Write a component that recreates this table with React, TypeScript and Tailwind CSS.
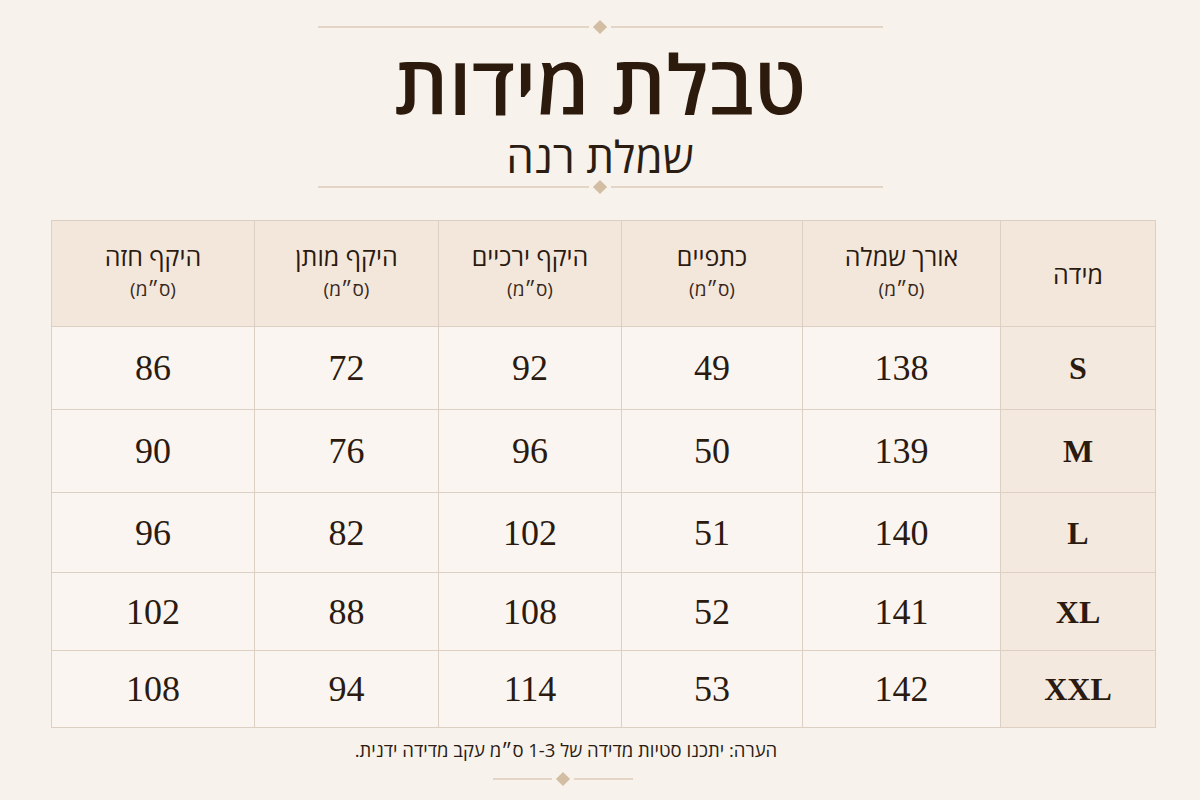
import React from "react";

const cols = [
  { w: "w-[155px]", t: "מידה", unit: false },
  { w: "w-[198px]", t: "אורך שמלה", unit: true },
  { w: "w-[181px]", t: "כתפיים", unit: true },
  { w: "w-[183px]", t: "היקף ירכיים", unit: true },
  { w: "w-[184px]", t: "היקף מותן", unit: true },
  { w: "w-[203px]", t: "היקף חזה", unit: true },
];

const rows = [
  ["S", "138", "49", "92", "72", "86"],
  ["M", "139", "50", "96", "76", "90"],
  ["L", "140", "51", "102", "82", "96"],
  ["XL", "141", "52", "108", "88", "102"],
  ["XXL", "142", "53", "114", "94", "108"],
];
const rowH = ["h-[83px]", "h-[83px]", "h-[80px]", "h-[78px]", "h-[77px]"];

const sans = '"Open Sans", "Liberation Sans", "DejaVu Sans", sans-serif';
const serif = '"Liberation Serif", "DejaVu Serif", serif';

function Ornament({ w }: { w: string }) {
  return (
    <div className={`flex items-center justify-center ${w}`}>
      <div className="h-[2px] flex-1 bg-[#e4d6c6]" />
      <div className="mx-[6px] h-[10px] w-[10px] rotate-45 bg-[#d3bda3]" />
      <div className="h-[2px] flex-1 bg-[#e4d6c6]" />
    </div>
  );
}

export default function App() {
  return (
    <div
      dir="rtl"
      className="flex h-[800px] w-[1200px] flex-col items-center bg-[#f8f2ec] text-[#2a1a0f]"
      style={{ fontFamily: sans }}
    >
      <div className="mt-[22px]">
        <Ornament w="w-[565px]" />
      </div>
      <div className="mt-[16px] h-[70px] text-[82px] font-semibold leading-[70px] text-[#2c1a0c]">
        טבלת מידות
      </div>
      <div className="mt-[18px] h-[40px] text-[44px] leading-[40px] text-[#2c1d12]">שמלת רנה</div>
      <div className="mt-[6px]">
        <Ornament w="w-[565px]" />
      </div>
      <table className="mt-[28px] ml-[7px] border-collapse">
        <thead>
          <tr className="h-[106px] bg-[#f3e7dc]">
            {cols.map((c, i) => (
              <th key={i} className={`${c.w} border border-[#ddd0c3] p-0 font-normal`}>
                <div className={`text-[25px] leading-[28px] text-[#2a1a10] ${c.unit ? "-mt-[6px]" : ""}`}>{c.t}</div>
                {c.unit && <div className="mt-[8px] text-[19px] leading-[22px] text-[#3a2a1e]">(ס״מ)</div>}
              </th>
            ))}
          </tr>
        </thead>
        <tbody>
          {rows.map((r, ri) => (
            <tr key={ri} className={rowH[ri]}>
              {r.map((v, ci) => (
                <td
                  key={ci}
                  className={`border border-[#ddd0c3] p-0 text-center ${
                    ci === 0 ? "bg-[#f4e9df] text-[32px] font-bold" : "bg-[#faf5f0] text-[36px]"
                  }`}
                  style={{ fontFamily: serif }}
                >
                  {v}
                </td>
              ))}
            </tr>
          ))}
        </tbody>
      </table>
      <div className="mt-[10px] mr-[68px] text-[18.5px] leading-[24px] text-[#2a1c12]">
        הערה: יתכנו סטיות מדידה של 1-3 ס״מ עקב מדידה ידנית.
      </div>
      <div className="mt-[12px] mr-[74px]">
        <Ornament w="w-[140px]" />
      </div>
    </div>
  );
}
